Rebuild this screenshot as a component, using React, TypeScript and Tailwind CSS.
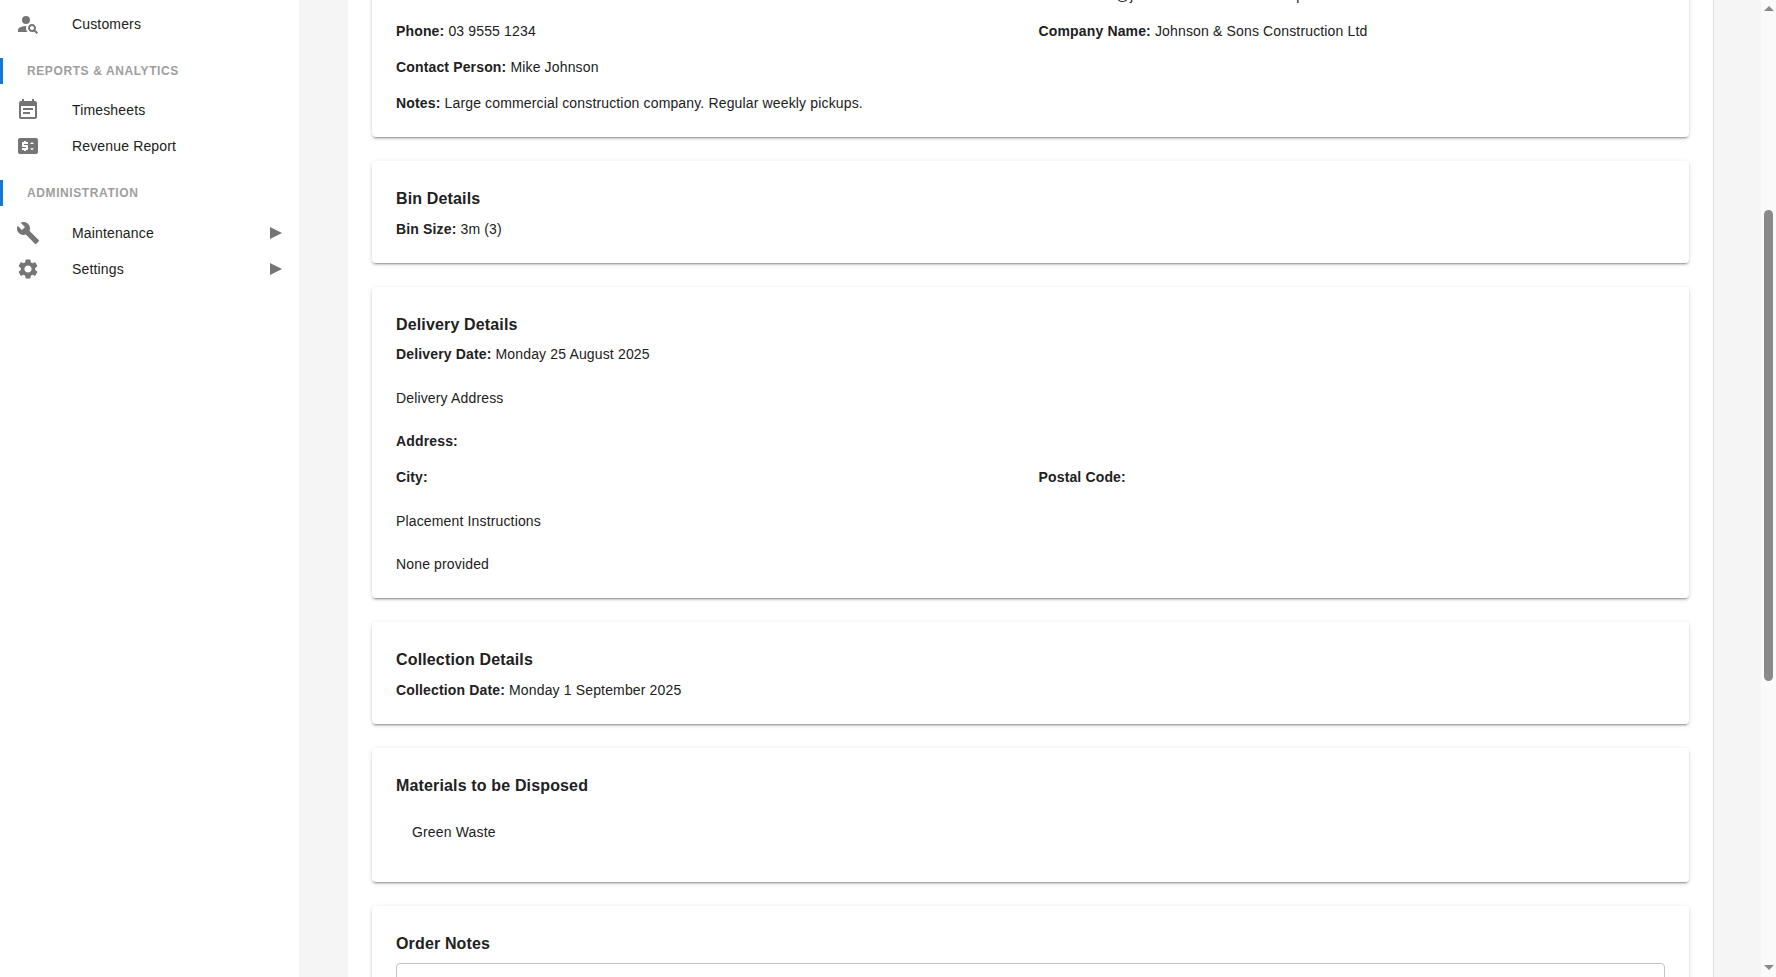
import type { ReactNode } from "react";

// Order details page, scrolled part way down. Scrollbar is drawn since headless hides the native one.

const FONT = "font-['Liberation_Sans',Arial,sans-serif]";

function Icon({ d }: { d: string }) {
  return (
    <svg viewBox="0 0 24 24" className="h-6 w-6 fill-[#757575]">
      <path d={d} />
    </svg>
  );
}

const ICONS = {
  customers:
    "M6 8a4 4 0 1 0 8 0a4 4 0 1 0-8 0M10.35 14.01C7.62 13.91 2 15.27 2 18v2h9.54c-2.47-2.76-1.23-5.92-1.19-5.99M19.43 18.02c.36-.59.57-1.28.57-2.02 0-2.21-1.79-4-4-4s-4 1.79-4 4 1.79 4 4 4c.74 0 1.43-.22 2.02-.57L20.59 22 22 20.59zM16 18c-1.1 0-2-.9-2-2s.9-2 2-2 2 .9 2 2-.9 2-2 2",
  timesheets:
    "M17 10H7v2h10v-2zm2-7h-1V1h-2v2H8V1H6v2H5c-1.11 0-1.99.9-1.99 2L3 19c0 1.1.89 2 2 2h14c1.1 0 2-.9 2-2V5c0-1.1-.9-2-2-2zm0 16H5V8h14v11zm-5-5H7v2h7v-2z",
  revenue:
    "M20 4H4c-1.11 0-1.99.89-1.99 2L2 18c0 1.11.89 2 2 2h16c1.11 0 2-.89 2-2V6c0-1.11-.89-2-2-2zM12 10H8v1h3c.55 0 1 .45 1 1v3c0 .55-.45 1-1 1h-1v1H8v-1H6v-2h4v-1H7c-.55 0-1-.45-1-1V9c0-.55.45-1 1-1h1V7h2v1h2v2zm4 6.25-2-2h4l-2 2zM14 10l2-2 2 2h-4z",
  maintenance:
    "M22.7 19l-9.1-9.1c.9-2.3.4-5-1.5-6.9-2-2-5-2.4-7.4-1.3L9 6 6 9 1.6 4.7C.4 7.1.9 10.1 2.9 12.1c1.9 1.9 4.6 2.4 6.9 1.5l9.1 9.1c.4.4 1 .4 1.4 0l2.3-2.3c.5-.4.5-1.1.1-1.4z",
  settings:
    "M19.14 12.94c.04-.3.06-.61.06-.94 0-.32-.02-.64-.07-.94l2.03-1.58c.18-.14.23-.41.12-.61l-1.92-3.32c-.12-.22-.37-.29-.59-.22l-2.39.96c-.5-.38-1.03-.7-1.62-.94l-.36-2.54c-.04-.24-.24-.41-.48-.41h-3.84c-.24 0-.43.17-.47.41l-.36 2.54c-.59.24-1.13.57-1.62.94l-2.39-.96c-.22-.08-.47 0-.59.22L2.74 8.87c-.12.21-.08.47.12.61l2.03 1.58c-.05.3-.09.63-.09.94s.02.64.07.94l-2.03 1.58c-.18.14-.23.41-.12.61l1.92 3.32c.12.22.37.29.59.22l2.39-.96c.5.38 1.03.7 1.62.94l.36 2.54c.05.24.24.41.48.41h3.84c.24 0 .44-.17.47-.41l.36-2.54c.59-.24 1.13-.56 1.62-.94l2.39.96c.22.08.47 0 .59-.22l1.92-3.32c.12-.22.07-.47-.12-.61l-2.01-1.58zM12 15.6c-1.98 0-3.6-1.62-3.6-3.6s1.62-3.6 3.6-3.6 3.6 1.62 3.6 3.6-1.62 3.6-3.6 3.6z",
};

function NavItem({ icon, label, arrow }: { icon: string; label: string; arrow?: boolean }) {
  return (
    <div className="flex h-9 items-center pl-4 pr-[17px]">
      <div className="w-[56px] shrink-0">
        <Icon d={icon} />
      </div>
      <span className="flex-1 text-sm text-[#212121]">{label}</span>
      {arrow && <span className="h-0 w-0 border-y-[6.5px] border-l-[12px] border-y-transparent border-l-[#757575]" />}
    </div>
  );
}

function NavHeading({ children }: { children: ReactNode }) {
  return (
    <div className="flex h-[26px] items-center border-l-[3px] border-[#1976d2] pl-6 text-xs font-bold tracking-[0.05em] text-[#9e9e9e]">
      {children}
    </div>
  );
}

function Sidebar() {
  return (
    <aside className="w-[299px] shrink-0 bg-white">
      <div className="mt-[6px]">
        <NavItem icon={ICONS.customers} label="Customers" />
      </div>
      <div className="mt-[16px]">
        <NavHeading>REPORTS &amp; ANALYTICS</NavHeading>
      </div>
      <div className="mt-2">
        <NavItem icon={ICONS.timesheets} label="Timesheets" />
        <NavItem icon={ICONS.revenue} label="Revenue Report" />
      </div>
      <div className="mt-[16px]">
        <NavHeading>ADMINISTRATION</NavHeading>
      </div>
      <div className="mt-[9px]">
        <NavItem icon={ICONS.maintenance} label="Maintenance" arrow />
        <NavItem icon={ICONS.settings} label="Settings" arrow />
      </div>
    </aside>
  );
}

function Card({ children, className = "" }: { children: ReactNode; className?: string }) {
  return (
    <section
      className={`rounded bg-white px-6 shadow-[0_3px_1px_-2px_rgba(0,0,0,0.2),0_2px_2px_0_rgba(0,0,0,0.14),0_1px_5px_0_rgba(0,0,0,0.12)] ${className}`}
    >
      {children}
    </section>
  );
}

function Field({ label, value }: { label: string; value?: string }) {
  return (
    <p className="text-sm leading-5 text-[#212121]">
      <strong className="font-bold">{label}:</strong> {value}
    </p>
  );
}

function Heading({ children }: { children: ReactNode }) {
  return <h2 className="mb-[6.6px] text-base leading-[27px] font-bold text-[#212121]">{children}</h2>;
}

function Scrollbar() {
  return (
    <div className="flex w-[15px] shrink-0 flex-col items-center bg-[#fafafa]">
      <div className="mt-[6px] h-0 w-0 border-x-[5px] border-b-[5px] border-x-transparent border-b-[#8a8a8a]" />
      <div className="mt-[199px] h-[471px] w-[9px] rounded-full bg-[#8a8a8a]" />
      <div className="mt-auto mb-[7px] h-0 w-0 border-x-[5px] border-t-[5px] border-x-transparent border-t-[#8a8a8a]" />
    </div>
  );
}

export default function App() {
  return (
    <div className={`flex h-screen overflow-hidden bg-[#f5f5f5] tracking-[0.15px] ${FONT}`}>
      <Sidebar />
      <main className="ml-[49px] w-[1366px] shrink-0 overflow-hidden border-r border-[#e0e0e0] bg-white px-6">
        {/* top of this card is scrolled out of view */}
        <Card className="-mt-[15px] pb-6">
          <div className="grid grid-cols-2 gap-x-4 gap-y-4">
            <div />
            <Field label="Email" value="mike@johnsonconstruction.example.com" />
            <Field label="Phone" value="03 9555 1234" />
            <Field label="Company Name" value="Johnson & Sons Construction Ltd" />
            <div className="col-span-2">
              <Field label="Contact Person" value="Mike Johnson" />
            </div>
            <div className="col-span-2">
              <Field label="Notes" value="Large commercial construction company. Regular weekly pickups." />
            </div>
          </div>
        </Card>

        <Card className="mt-6 py-6">
          <Heading>Bin Details</Heading>
          <Field label="Bin Size" value="3m (3)" />
        </Card>

        <Card className="mt-6 py-6">
          <Heading>Delivery Details</Heading>
          <Field label="Delivery Date" value="Monday 25 August 2025" />
          <p className="mt-6 text-sm leading-5 text-[#212121]">Delivery Address</p>
          <div className="mt-[23px]">
            <Field label="Address" />
          </div>
          <div className="mt-4 grid grid-cols-2 gap-x-4">
            <Field label="City" />
            <Field label="Postal Code" />
          </div>
          <p className="mt-6 text-sm leading-5 text-[#212121]">Placement Instructions</p>
          <p className="mt-[23px] text-sm leading-5 text-[#212121]">None provided</p>
        </Card>

        <Card className="mt-6 py-6">
          <Heading>Collection Details</Heading>
          <Field label="Collection Date" value="Monday 1 September 2025" />
        </Card>

        <Card className="mt-6 pt-6 pb-10">
          <Heading>Materials to be Disposed</Heading>
          <p className="mt-[23px] pl-4 text-sm leading-5 text-[#212121]">Green Waste</p>
        </Card>

        <Card className="mt-6 py-6">
          <Heading>Order Notes</Heading>
          <div className="h-[100px] rounded border border-[#c4c4c4]" />
        </Card>
      </main>
      <div className="flex-1" />
      <Scrollbar />
    </div>
  );
}
